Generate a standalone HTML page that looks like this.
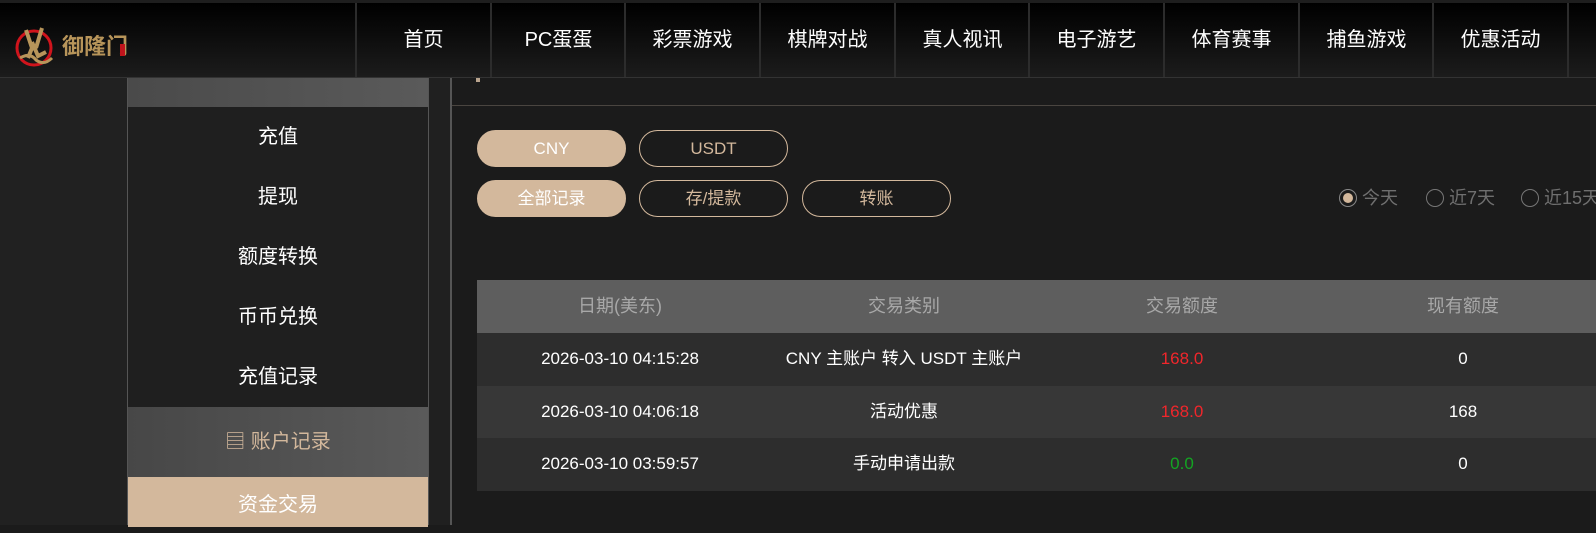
<!DOCTYPE html>
<html><head><meta charset="utf-8"><style>
*{margin:0;padding:0;box-sizing:border-box}
body{width:1596px;height:525px;overflow:hidden;background:#1b1b1b;font-family:"Liberation Sans","Noto Sans CJK SC",sans-serif;position:relative}
.abs{position:absolute}
.hdr{left:0;top:0;width:1596px;height:78px;background:linear-gradient(#000,#1c1c1c);border-top:3px solid #1e1e1e;border-bottom:1px solid #333}
.nav{top:3px;height:74px;width:135px;border-left:2px solid #2c2c2c;color:#fff;font-size:20px;text-align:center;line-height:74px}
.side{left:127px;top:78px;width:302px;height:447px;background:#1f1f1f;border-left:1px solid #555;border-right:1px solid #555}
.si{position:absolute;left:0;width:300px;height:60px;line-height:60px;text-align:center;color:#fff;font-size:20px}
.pill{position:absolute;height:37px;width:149px;border-radius:19px;text-align:center;line-height:35px;font-size:17px;border:1px solid #d3b89c;color:#d3b89c}
.pill.on{background:#d3b89c;color:#fff}
.row{position:absolute;left:477px;width:1119px;height:52.5px;font-size:17px;color:#fff}
.row span{position:absolute;top:0;line-height:52px;transform:translateX(-50%);white-space:nowrap}
.radio{position:absolute;top:189px;color:#6f6f6f;font-size:18px;line-height:18px;white-space:nowrap}
.radio i{display:inline-block;width:18px;height:18px;border:1.5px solid #777;border-radius:50%;vertical-align:-3px;margin-right:5px;position:relative}
</style></head><body>
<div class="abs" style="left:0;top:78px;width:127px;height:447px;background:#212121"></div>
<div class="abs" style="left:429px;top:78px;width:21px;height:447px;background:#202020"></div>
<div class="abs" style="left:450px;top:78px;width:2px;height:447px;background:#555"></div>
<div class="abs" style="left:452px;top:105px;width:1144px;height:1px;background:#4a4540"></div>
<div class="abs" style="left:476px;top:74px;width:4px;height:8px;background:#b9a48e"></div>

<div class="abs hdr"></div>
<svg class="abs" style="left:8px;top:14px" width="120" height="56" viewBox="0 0 120 56">
<circle cx="26" cy="34" r="17" fill="none" stroke="#d0141c" stroke-width="3"/>
<path d="M18 16 L24 34 L20 44 M34 14 L28 34 M24 28 L30 42 L38 38" fill="none" stroke="#b8955a" stroke-width="4"/>
<path d="M12 44 Q22 38 28 46 Q36 52 44 44" fill="none" stroke="#b8955a" stroke-width="3"/>
<text x="54" y="40" fill="#b8955a" font-size="22" font-weight="bold" font-family="Noto Sans CJK SC,sans-serif">御隆门</text>
<rect x="112" y="30" width="5" height="12" fill="#c0141c"/>
</svg>
<div class="abs nav" style="left:355px">首页</div>
<div class="abs nav" style="left:490px">PC蛋蛋</div>
<div class="abs nav" style="left:624px">彩票游戏</div>
<div class="abs nav" style="left:759px">棋牌对战</div>
<div class="abs nav" style="left:894px">真人视讯</div>
<div class="abs nav" style="left:1028px">电子游艺</div>
<div class="abs nav" style="left:1163px">体育赛事</div>
<div class="abs nav" style="left:1298px">捕鱼游戏</div>
<div class="abs nav" style="left:1432px">优惠活动</div>
<div class="abs nav" style="left:1567px"></div>

<div class="abs side">
<div class="si" style="top:0;height:29px;background:linear-gradient(90deg,#4a4a4a,#5a5a5a)"></div>
<div class="si" style="top:29px">充值</div>
<div class="si" style="top:89px">提现</div>
<div class="si" style="top:149px">额度转换</div>
<div class="si" style="top:209px">币币兑换</div>
<div class="si" style="top:269px">充值记录</div>
<div class="si" style="top:329px;height:70px;line-height:70px;background:linear-gradient(90deg,#474747,#5a5a5a);color:#d3b89c">▤ 账户记录</div>
<div class="si" style="top:399px;height:50px;line-height:56px;background:#d3b89c">资金交易</div>
</div>

<div class="pill on" style="left:477px;top:130px">CNY</div>
<div class="pill" style="left:639px;top:130px">USDT</div>
<div class="pill on" style="left:477px;top:180px">全部记录</div>
<div class="pill" style="left:639px;top:180px">存/提款</div>
<div class="pill" style="left:802px;top:180px">转账</div>

<div class="radio" style="left:1339px"><i style="border-color:#888"><b style="position:absolute;left:2.5px;top:2.5px;width:10px;height:10px;border-radius:50%;background:#d3b89c"></b></i>今天</div>
<div class="radio" style="left:1426px"><i></i>近7天</div>
<div class="radio" style="left:1521px"><i></i>近15天</div>

<div class="row" style="top:280px;height:53px;background:#5e5e5e;color:#a8a8a8;font-size:18px"><span style="left:143px">日期(美东)</span><span style="left:427px">交易类别</span><span style="left:705px">交易额度</span><span style="left:986px">现有额度</span></div>
<div class="row" style="top:333px;background:#2d2d2d"><span style="left:143px">2026-03-10 04:15:28</span><span style="left:427px">CNY 主账户 转入 USDT 主账户</span><span style="left:705px;color:#f0262b">168.0</span><span style="left:986px">0</span></div>
<div class="row" style="top:385.5px;background:#373737"><span style="left:143px">2026-03-10 04:06:18</span><span style="left:427px">活动优惠</span><span style="left:705px;color:#f0262b">168.0</span><span style="left:986px">168</span></div>
<div class="row" style="top:438px;background:#2d2d2d"><span style="left:143px">2026-03-10 03:59:57</span><span style="left:427px">手动申请出款</span><span style="left:705px;color:#13a522">0.0</span><span style="left:986px">0</span></div>
</body></html>
